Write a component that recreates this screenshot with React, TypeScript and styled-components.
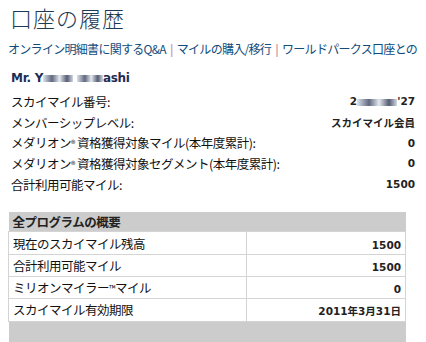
import React from "react";
import styled, { createGlobalStyle } from "styled-components";

const GlobalStyle = createGlobalStyle`
  body {
    margin: 0;
    background: #fff;
    font-family: "Noto Sans CJK JP", "DejaVu Sans", sans-serif;
    color: #111;
  }
`;

const Page = styled.div`
  width: 426px;
  height: 342px;
  overflow: hidden;
  padding: 0 8px;
  box-sizing: border-box;
`;

const Title = styled.h1`
  margin: 0;
  padding: 4px 0 0 2px;
  font-size: 22px;
  font-weight: 300;
  line-height: 26px;
  color: #1d3a55;
  letter-spacing: 1px;
`;

const LinkBar = styled.div`
  margin-top: 11px;
  white-space: nowrap;
  overflow: hidden;
  font-size: 12px;
  line-height: 16px;
  letter-spacing: -0.7px;
`;

const NavLink = styled.a`
  color: #114c7b;
  text-decoration: none;
`;

const Sep = styled.span`
  color: #d49aa3;
  font-weight: bold;
  margin: 0 4px;
`;

const Name = styled.div`
  margin: 14px 0 0 3px;
  font-family: "DejaVu Sans", sans-serif;
  font-weight: bold;
  font-size: 12px;
  line-height: 14px;
  color: #1f2d55;
  letter-spacing: -0.3px;
`;

const Mask = styled.span<{ $w: number }>`
  display: inline-block;
  width: ${(p) => p.$w}px;
  height: 7px;
  vertical-align: middle;
  background: linear-gradient(90deg, #d5dde8, #3a4460 30%, #e0e4ec 55%, #2c3450 80%, #c8d0dc);
  filter: blur(0.6px);
  opacity: 0.8;
`;

const InfoList = styled.div`
  margin-top: 6px;
  padding: 0 3px;
`;

const InfoRow = styled.div`
  display: flex;
  justify-content: space-between;
  align-items: center;
  height: 20.7px;
  font-size: 12.5px;
  letter-spacing: -0.5px;
`;

const Value = styled.span`
  font-family: "DejaVu Sans", "Noto Sans CJK JP", sans-serif;
  font-weight: bold;
  font-size: 10.5px;
  color: #222;
  letter-spacing: 0;
`;

const Small = styled.span`
  font-size: 9px;
  vertical-align: 1px;
`;

const Table = styled.table`
  margin-top: 18px;
  width: 398px;
  border-collapse: collapse;
  font-size: 12.5px;
  letter-spacing: -0.5px;
`;

const HeadCell = styled.th`
  background: #cccccc;
  text-align: left;
  font-weight: bold;
  height: 19px;
  padding: 0 4px;
  color: #222;
`;

const Cell = styled.td<{ $num?: boolean }>`
  border: 1px solid #d4d4d4;
  height: 21.3px;
  padding: 0 4px;
  text-align: ${(p) => (p.$num ? "right" : "left")};
  ${(p) => (p.$num ? "width: 150px;" : "")}
`;

const FootCell = styled.td`
  background: #cccccc;
  height: 24px;
`;

const info: [React.ReactNode, React.ReactNode][] = [
  ["スカイマイル番号:", <>2<Mask $w={40} />'27</>],
  ["メンバーシップレベル:", "スカイマイル会員"],
  [<>メダリオン<Small>®</Small> 資格獲得対象マイル(本年度累計):</>, "0"],
  [<>メダリオン<Small>®</Small> 資格獲得対象セグメント(本年度累計):</>, "0"],
  ["合計利用可能マイル:", "1500"],
];

const rows: [React.ReactNode, string][] = [
  ["現在のスカイマイル残高", "1500"],
  ["合計利用可能マイル", "1500"],
  [<>ミリオンマイラー<Small>™</Small>マイル</>, "0"],
  ["スカイマイル有効期限", "2011年3月31日"],
];

export default function App() {
  return (
    <>
      <GlobalStyle />
      <Page>
        <Title>口座の履歴</Title>
        <LinkBar>
          <NavLink href="#">オンライン明細書に関するQ&amp;A</NavLink>
          <Sep>|</Sep>
          <NavLink href="#">マイルの購入/移行</NavLink>
          <Sep>|</Sep>
          <NavLink href="#">ワールドパークス口座とのリンク</NavLink>
        </LinkBar>
        <Name>
          Mr. Y<Mask $w={30} /> <Mask $w={26} />ashi
        </Name>
        <InfoList>
          {info.map(([label, value], i) => (
            <InfoRow key={i}>
              <span>{label}</span>
              <Value>{value}</Value>
            </InfoRow>
          ))}
        </InfoList>
        <Table>
          <thead>
            <tr>
              <HeadCell colSpan={2}>全プログラムの概要</HeadCell>
            </tr>
          </thead>
          <tbody>
            {rows.map(([label, value], i) => (
              <tr key={i}>
                <Cell>{label}</Cell>
                <Cell $num>
                  <Value>{value}</Value>
                </Cell>
              </tr>
            ))}
            <tr>
              <FootCell colSpan={2} />
            </tr>
          </tbody>
        </Table>
      </Page>
    </>
  );
}
